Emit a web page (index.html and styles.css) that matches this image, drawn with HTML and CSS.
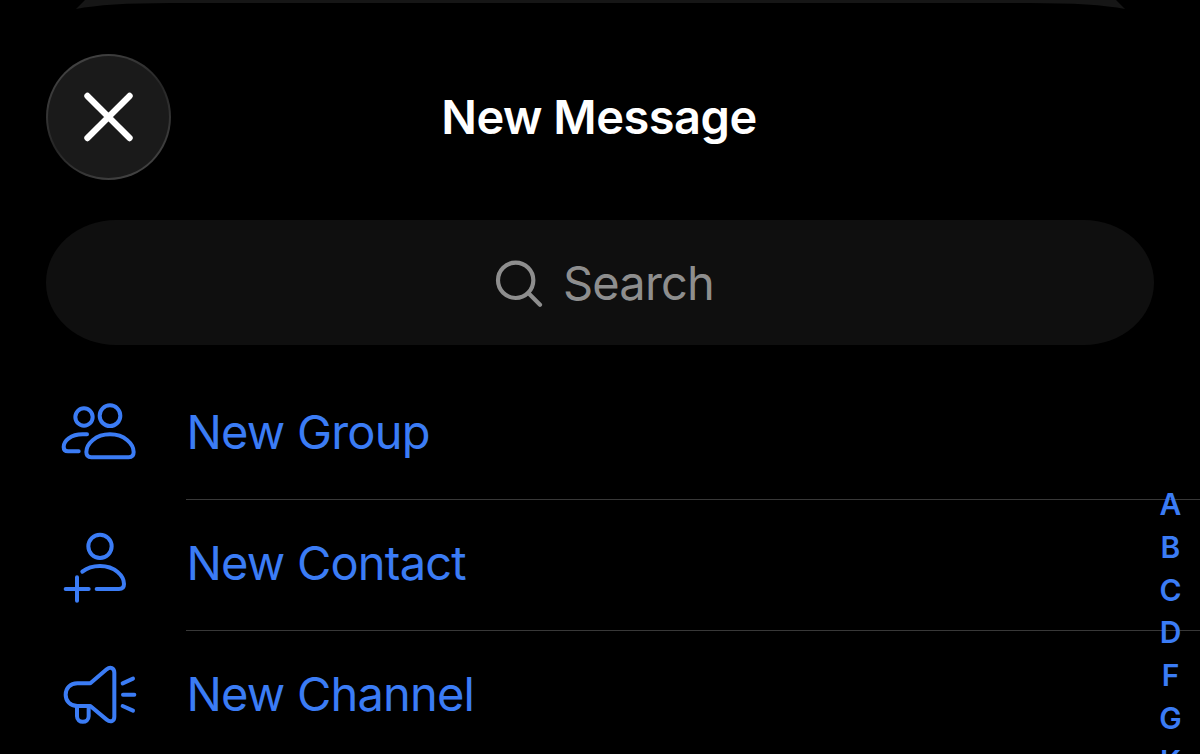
FILE: index.html
```html
<!DOCTYPE html>
<html lang="en">
<head>
    <meta charset="UTF-8">
    <meta name="viewport" content="width=device-width, initial-scale=1.0">
    <title>New Message</title>
    <link rel="stylesheet" href="styles.css">
</head>
<body>
    <div class="sheet">
        <!-- Edge of the card behind the sheet -->
        <svg class="sheet-edge" viewBox="0 0 1200 12">
            <path d="M85 0H1116L1125 9Q1095 3 1030 3H170Q106 3 76 9Z" fill="#161616"/>
        </svg>

        <header class="header">
            <button class="close" aria-label="Close">
                <svg viewBox="0 0 50 50">
                    <path d="M3.5 3.5L46.5 46.5M46.5 3.5L3.5 46.5"/>
                </svg>
            </button>
            <h1 class="title">New Message</h1>
        </header>

        <div class="search">
            <svg class="search-icon" viewBox="0 0 144 144">
                <circle cx="62" cy="64" r="53"/>
                <path d="M100 102L135 137"/>
            </svg>
            <span class="search-text">Search</span>
        </div>

        <ul class="actions">
            <li class="action">
                <svg class="action-icon" viewBox="0 0 360 270">
                    <circle cx="132" cy="81" r="26"/>
                    <circle cx="210" cy="77" r="31"/>
                    <path d="M141 133H128C92 133 71 153 71 171Q71 184 84 184H116"/>
                    <path d="M210 133C166 133 139 162 139 186Q139 202 154 202H266Q281 202 281 186C281 162 254 133 210 133Z"/>
                </svg>
                <span class="action-label">New Group</span>
            </li>
            <li class="action">
                <svg class="action-icon" viewBox="0 1 360 270">
                    <circle cx="180" cy="77" r="35"/>
                    <path d="M127 153C142 141 159 136 180 136C225 136 252 166 252 190Q252 205 237 205H170"/>
                    <path d="M111 170V240M77 205H146"/>
                </svg>
                <span class="action-label">New Contact</span>
            </li>
            <li class="action">
                <svg class="action-icon" viewBox="0 -8 360 270">
                    <path d="M112 86H151L200 44C211 35 223 40 223 54V186C223 200 211 204 200 195L151 154H112C90 154 77 139 77 120S90 86 112 86Z"/>
                    <path d="M111 156V185C111 207 146 207 146 185V156"/>
                    <path d="M248 86L279 72M249 120H283M248 154L279 168"/>
                </svg>
                <span class="action-label">New Channel</span>
            </li>
        </ul>

        <nav class="index">
            <span>A</span>
            <span>B</span>
            <span>C</span>
            <span>D</span>
            <span>F</span>
            <span>G</span>
            <span>K</span>
        </nav>
    </div>
</body>
</html>
```
FILE: styles.css
```css
* {
    box-sizing: border-box;
}

body {
    margin: 0;
    background: #000;
    font-family: Inter, "Liberation Sans", sans-serif;
}

.sheet {
    position: relative;
    height: 754px;
    overflow: hidden;
    background: #000;
}

.sheet-edge {
    display: block;
    width: 1200px;
    height: 12px;
}

.header {
    display: grid;
    grid-template-columns: 125px 1fr 127px;
    align-items: center;
    padding: 42px 46px 0;
}

.close {
    display: flex;
    align-items: center;
    justify-content: center;
    width: 125px;
    height: 126px;
    padding: 0;
    border: 2px solid transparent;
    border-radius: 50%;
    background:
        linear-gradient(#1a1a1a, #1a1a1a) padding-box,
        linear-gradient(150deg, #444 10%, #262626 50%, #444 90%) border-box;
}

.close svg {
    width: 49px;
    height: 50px;
    fill: none;
    stroke: #fff;
    stroke-width: 6.4;
    stroke-linecap: round;
}

.title {
    margin: 0;
    color: #fff;
    font-size: 47px;
    font-weight: 600;
    line-height: 60px;
    letter-spacing: -0.5px;
    text-align: center;
}

.search {
    display: flex;
    align-items: center;
    justify-content: center;
    gap: 20px;
    height: 125px;
    margin: 40px 46px 0;
    padding-left: 9px;
    border-radius: 70px / 62.5px;
    background: #0f0f0f;
    color: #8e8e8e;
}

.search-icon {
    width: 48px;
    height: 48px;
    fill: none;
    stroke: currentColor;
    stroke-width: 12.5;
    stroke-linecap: round;
}

.search-text {
    font-size: 47px;
    line-height: 60px;
    letter-spacing: -0.8px;
}

.actions {
    margin: 24px 0 0;
    padding: 0;
    list-style: none;
    color: #3b7cf5;
}

.action {
    display: flex;
    align-items: center;
    height: 131px;
    padding-left: 40px;
}

.action-icon {
    flex: none;
    width: 120px;
    height: 90px;
    margin-right: 26px;
    fill: none;
    stroke: currentColor;
    stroke-width: 12;
    stroke-linecap: round;
    stroke-linejoin: round;
}

.action-label {
    flex: 1;
    height: 131px;
    padding-left: 0.5px;
    border-bottom: 1px solid #383838;
    font-size: 47px;
    line-height: 126px;
    letter-spacing: -0.8px;
}

/* Letter index lies over the list */
.index {
    position: absolute;
    top: 483px;
    right: 9px;
    display: flex;
    flex-direction: column;
    width: 41px;
    color: #3b7cf5;
    font-size: 30px;
    font-weight: 600;
    line-height: 42.8px;
    text-align: center;
}
```
